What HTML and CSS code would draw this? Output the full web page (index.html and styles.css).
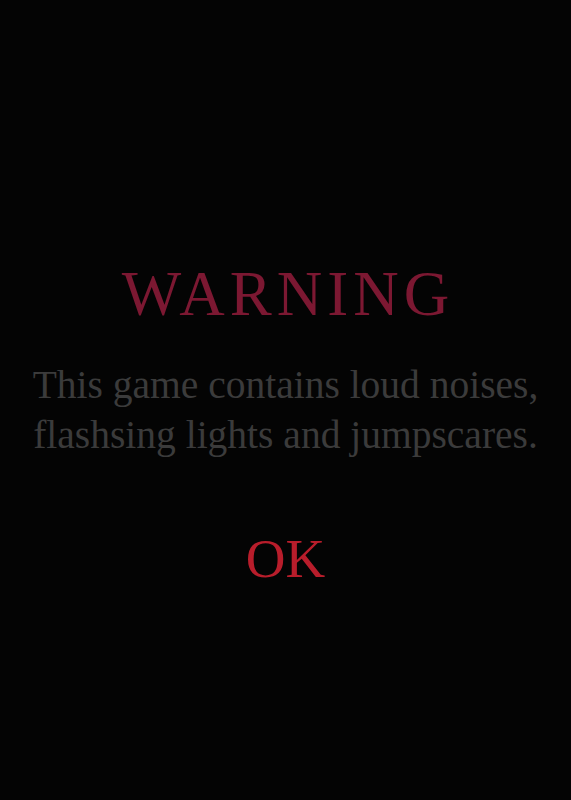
FILE: index.html
```html
<!DOCTYPE html>
<html lang="en">
<head>
<meta charset="utf-8">
<title>Warning</title>
<link rel="stylesheet" href="styles.css">
</head>
<body>
<main class="warning-screen">
  <h1 class="warning-title">WARNING</h1>
  <p class="warning-text">This game contains loud noises,<br>flashsing lights and jumpscares.</p>
  <button class="warning-ok" type="button">OK</button>
</main>
</body>
</html>
```
FILE: styles.css
```css
html, body {
  margin: 0;
  padding: 0;
  background: #040404;
}

.warning-screen {
  width: 571px;
  height: 800px;
  box-sizing: border-box;
  padding-top: 258px;
  display: flex;
  flex-direction: column;
  align-items: center;
  font-family: "Liberation Serif", "Times New Roman", serif;
}

.warning-title {
  margin: 0;
  padding-left: 5px;
  font-weight: normal;
  font-size: 63px;
  line-height: 72px;
  letter-spacing: 5px;
  color: #7c1832;
}

.warning-text {
  margin: 30px 0 0;
  font-size: 39.5px;
  line-height: 50px;
  text-align: center;
  color: #3b3b3b;
}

.warning-ok {
  margin-top: 69px;
  padding: 0;
  border: 0;
  background: none;
  font-family: inherit;
  font-size: 55px;
  line-height: 60px;
  color: #b81d2b;
  cursor: pointer;
}
```
